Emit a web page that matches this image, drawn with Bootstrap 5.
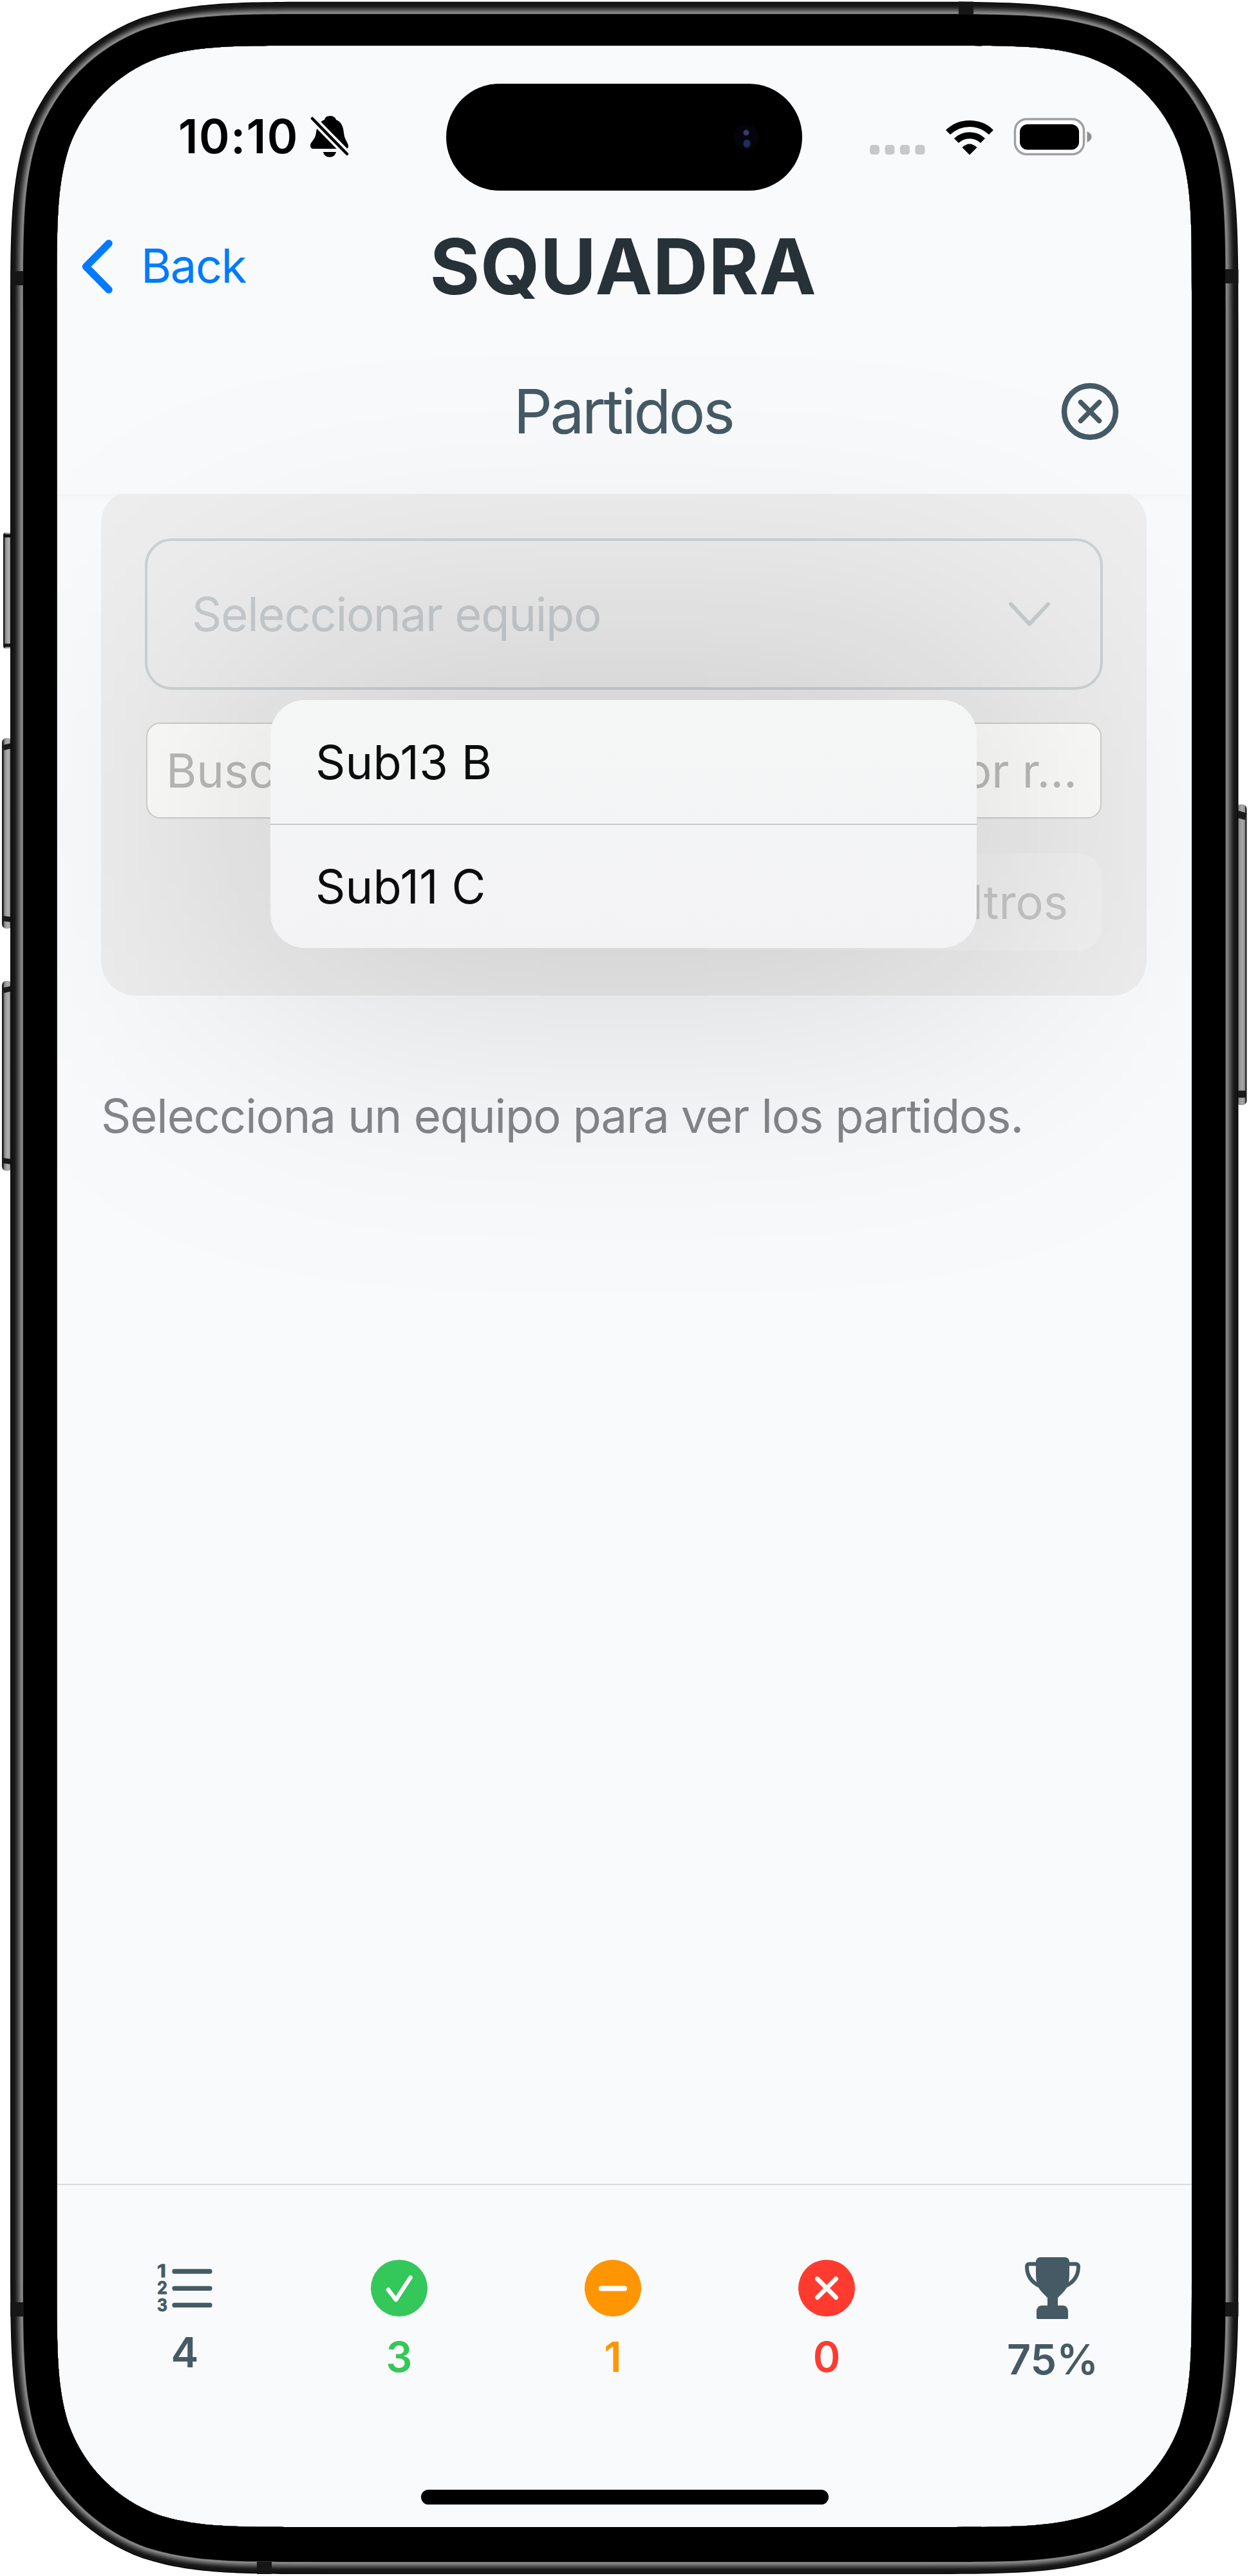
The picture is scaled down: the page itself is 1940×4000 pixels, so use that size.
<!DOCTYPE html>
<html lang="es">
<head>
<meta charset="utf-8">
<meta name="viewport" content="width=device-width, initial-scale=1">
<title>SQUADRA</title>
<link href="https://cdn.jsdelivr.net/npm/bootstrap@5.3.0/dist/css/bootstrap.min.css" rel="stylesheet">
<style>
  html, body { margin: 0; background: #fff; }
  body { font-family: Inter, "Liberation Sans", sans-serif; font-size: 72.3px; line-height: 1; color: #000; }
  .device { width: 1940px; height: 4000px; padding: 71px 89px 76px; overflow: hidden; }
  .device-frame { left: 0; top: 0; z-index: 20; pointer-events: none; }
  .phone-screen { background: #f9fafc; border-radius: 180px; height: 3853px; overflow: hidden; }
  .statusbar { height: 250px; padding: 33px 155px 0 188px; }
  .clock { font-weight: 600; letter-spacing: .02em; }
  .bell { margin-left: 18px; }
  .island { left: 604px; top: 59px; width: 553px; height: 166px; border-radius: 83px; background: #000; z-index: 6; }
  .titlebar { height: 183px; padding-right: 4px; padding-top: 3px; }
  .back-link { left: 37px; top: 0; height: 100%; padding-top: 2px; color: #007aff; letter-spacing: -.02em; }
  .back-link span { margin-left: 43px; }
  .brand-title { font-size: 119px; font-weight: 700; color: #263238; letter-spacing: .005em; }
  .subbar { height: 263px; padding-top: 6px; padding-right: 4px; color: #455a64; }
  .subbar h2 { font-size: 94.500px; font-weight: 400; letter-spacing: -.037em; }
  .close-btn { right: 113px; top: 90px; padding: 0; border: 0; background: none; line-height: 0; }
  .header-edge { height: 14px; margin-bottom: -14px; background: linear-gradient(rgba(0,0,0,.02), rgba(0,0,0,0)); }
  .filter-panel { margin: 0 70px 0 68px; height: 779px; padding: 69px 68px 0; border-radius: 36px 36px 54px 54px / 46px 46px 54px 54px; background: #eeeeef; }
  .team-select { height: 235px; border: 4.5px solid #cdd2d5; border-radius: 42px; padding: 1px 78px 0 69px; color: #c7cccf; letter-spacing: -.0165em; }
  .search-box { height: 149px; margin: 51px 2px 0; border: 2px solid #cfcfcf; border-radius: 22px; background: #fdfdfc; padding: 2px 36px 0 29px; color: #bbb; }
  .clear-btn { height: 151px; width: 640px; margin: 54px 2px 0 auto; border-radius: 36px; background: #f2f2f3; padding: 2px 52px 0 0; color: #c7c7c7; }
  .menu-glow { left: 271px; top: 956px; width: 1217px; height: 505px; z-index: 4; border-radius: 80px; background: rgba(0,0,0,.155); filter: blur(235px); }
  .menu-pop { left: 331px; top: 1016px; width: 1097px; height: 385px; z-index: 5; border-radius: 54px; background: linear-gradient(#f5f6f6, #f3f3f5); color: #0c0c0c; overflow: hidden; letter-spacing: .003em; }
  .menu-pop li { height: 192px; padding: 2px 0 0 70px; }
  .menu-pop li + li { border-top: 2.5px solid #c9cbcc; }
  .empty-note { color: #86868a; margin: 151px 0 0 68px; letter-spacing: -.0152em; }
  .statbar { height: 533px; border-top: 2.5px solid #dadbdd; font-size: 64.500px; font-weight: 600; color: #455a64; }
  .stat-list { height: 416px; padding-left: 152px; gap: 242px; }
  .stat-item { width: 90px; gap: 31px; white-space: nowrap; }
  .stat-first { width: 92px; }
  .stat-last { width: 128px; }
  .c-win { color: #34c759; }
  .c-draw { color: #ff9500; }
  .c-loss { color: #ff3b30; }
  .home-bar { left: 565px; bottom: 35px; width: 633px; height: 23px; border-radius: 12px; background: #000; }
</style>
<script src="https://cdn.jsdelivr.net/npm/bootstrap@5.3.0/dist/js/bootstrap.bundle.min.js"></script>
</head>
<body>
<div class="device position-relative">
  <main class="phone-screen position-relative d-flex flex-column">
    <div class="statusbar d-flex align-items-center justify-content-between flex-shrink-0">
      <div class="d-flex align-items-center">
        <span class="clock">10:10</span>
        <svg class="bell" width="60" height="66" viewBox="0 0 60 66"><path d="M31 1c5 0 8 2.500 9 6 8 3 11 10 12 20 1 12 7 15 7 21 0 3-2 4-4 4H5c-3 0-5-2-5-5 0-6 8-9 9-20C10 17 14 10 22 7c1-4 4-6 9-6z"/><path d="M20 57h20c-1 5-5 8-10 8s-9-3-10-8z"/><path d="M-1 1L62 65" stroke="#f9fafc" stroke-width="12"/><path d="M3 5L57 60" stroke="#000" stroke-width="4.500" stroke-linecap="round"/></svg>
      </div>
      <svg width="346" height="60" viewBox="1350 182 346 60"><g fill="#c8c8ca"><rect x="1351" y="224" width="15" height="15" rx="4.500"/><rect x="1374.500" y="224" width="15" height="15" rx="4.500"/><rect x="1398" y="224" width="15" height="15" rx="4.500"/><rect x="1421.500" y="224" width="15" height="15" rx="4.500"/></g>
        <g fill="none" stroke="#000" stroke-width="10"><path d="M1472.500 204.500a48 48 0 0 1 67 0"/><path d="M1485.500 217.500a29.500 29.500 0 0 1 41 0"/></g><path d="M1494.500 228q11.500-11 23 0l-11.500 11.500z"/>
        <rect x="1576.500" y="184" width="107" height="54.500" rx="18" fill="#fff" stroke="#a0a0a2" stroke-width="3.500"/><rect x="1584" y="192" width="92" height="39.500" rx="12"/><path d="M1688.500 203q7 3 7 8.500t-7 8.500z" fill="#8e8e90"/></svg>
    </div>
    <div class="island position-absolute"><svg class="d-block" width="553" height="166"><ellipse cx="466" cy="83" rx="19" ry="20" fill="#04040c"/><circle cx="466" cy="76" r="4.500" fill="#3a3870"/><ellipse cx="467" cy="93" rx="5.500" ry="6.500" fill="#222c58"/></svg></div>

    <header class="titlebar position-relative d-flex align-items-center justify-content-center flex-shrink-0">
      <a class="back-link position-absolute d-flex align-items-center text-decoration-none" href="#"><svg width="50" height="86" viewBox="0 0 50 86" fill="none" stroke="#007aff" stroke-width="11.500" stroke-linecap="round" stroke-linejoin="round"><path d="M43 7L7.500 43 43 79"/></svg><span>Back</span></a>
      <h1 class="brand-title m-0">SQUADRA</h1>
    </header>
    <div class="subbar position-relative d-flex align-items-center justify-content-center flex-shrink-0">
      <h2 class="m-0">Partidos</h2>
      <button class="close-btn position-absolute" aria-label="Cerrar"><svg width="90" height="90" viewBox="0 0 90 90" fill="none" stroke="#455a64" stroke-width="8.500" stroke-linecap="round"><circle cx="45" cy="45" r="40"/><path d="M30.500 30.500l29 29m0-29l-29 29" stroke-width="7.500"/></svg></button>
    </div>
    <div class="header-edge flex-shrink-0"></div>

    <section class="filter-panel flex-shrink-0">
      <div class="team-select d-flex align-items-center justify-content-between"><span>Seleccionar equipo</span><svg width="64" height="38" viewBox="0 0 64 38" fill="none" stroke="currentColor" stroke-width="6" stroke-linecap="round" stroke-linejoin="round"><path d="M3 3l29 31L61 3"/></svg></div>
      <div class="search-box d-flex align-items-center justify-content-between"><span>Buscar</span><span>por r…</span></div>
      <div class="clear-btn d-flex align-items-center justify-content-end"><span>Limpiar filtros</span></div>
    </section>
    <p class="empty-note mb-0">Selecciona un equipo para ver los partidos.</p>

    <div class="menu-glow position-absolute"></div>
    <ul class="menu-pop position-absolute list-unstyled m-0">
      <li class="d-flex align-items-center">Sub13 B</li>
      <li class="d-flex align-items-center">Sub11 C</li>
    </ul>

    <footer class="statbar mt-auto flex-shrink-0">
      <div class="stat-list d-flex align-items-center">
        <div class="stat-item stat-first d-flex flex-column align-items-center">
          <svg class="overflow-visible" width="87" height="74" viewBox="0 0 87 74"><g font-family="Inter, sans-serif" font-weight="700" font-size="27" fill="#455a64" stroke="#455a64" stroke-width=".8"><text x="0" y="20" textLength="14" lengthAdjust="spacingAndGlyphs">1</text><text x="0" y="46" textLength="16" lengthAdjust="spacingAndGlyphs">2</text><text x="0" y="73" textLength="16" lengthAdjust="spacingAndGlyphs">3</text></g><g stroke="#455a64" stroke-width="7.300" stroke-linecap="round"><path d="M27 11h55M27 37.300h55M27 63.400h55"/></g></svg>
          <span>4</span>
        </div>
        <div class="stat-item c-win d-flex flex-column align-items-center">
          <svg width="88" height="88" viewBox="0 0 88 88"><circle cx="44" cy="44" r="44" fill="#34c759"/><path d="M27 46.500L39 62 61.500 27.500" fill="none" stroke="#fff" stroke-width="6.500" stroke-linecap="round" stroke-linejoin="round"/></svg>
          <span>3</span>
        </div>
        <div class="stat-item c-draw d-flex flex-column align-items-center">
          <svg width="88" height="88" viewBox="0 0 88 88"><circle cx="44" cy="44" r="44" fill="#ff9500"/><path d="M26 44.500h36" stroke="#fff" stroke-width="8" stroke-linecap="round"/></svg>
          <span>1</span>
        </div>
        <div class="stat-item c-loss d-flex flex-column align-items-center">
          <svg width="88" height="88" viewBox="0 0 88 88"><circle cx="44" cy="44" r="44" fill="#ff3b30"/><path d="M29.500 29.500l29 29m0-29l-29 29" stroke="#fff" stroke-width="7" stroke-linecap="round"/></svg>
          <span>0</span>
        </div>
        <div class="stat-item stat-last d-flex flex-column align-items-center">
          <svg width="86" height="96" viewBox="0 0 86 96" fill="#455a64"><path d="M24 0h38c4 0 7 3 7 7v19c0 15-4 23-10 29l-8 8v14h-16v-14l-8-8c-6-6-10-14-10-29V7c0-4 3-7 7-7z"/><path d="M19 77h0c0 0 5-2 8-2h32c5 0 8 4 8 9v10c0 1.500-1 2-2 2H20c-1.500 0-2-1-2-2V84c0-4 2-7 5-8z"/><path d="M20 10.500H7c-2.500 0-4 1.500-4 4C3 33 15 43 31 48M66 10.500h13c2.500 0 4 1.500 4 4C83 33 71 43 55 48" fill="none" stroke="#455a64" stroke-width="6"/></svg>
          <span>75%</span>
        </div>
      </div>
    </footer>
    <div class="home-bar position-absolute"></div>
  </main>

  <svg class="device-frame position-absolute" width="1940" height="4000" viewBox="0 0 1940 4000">
    <defs>
      <linearGradient id="keyL"><stop offset="0" stop-color="#111"/><stop offset=".15" stop-color="#333"/><stop offset=".25" stop-color="#8c8c8c"/><stop offset=".6" stop-color="#b0b0b0"/><stop offset=".85" stop-color="#8a8a8a"/><stop offset="1" stop-color="#333"/></linearGradient>
      <linearGradient id="keyR"><stop offset="0" stop-color="#555"/><stop offset=".2" stop-color="#8a8a8a"/><stop offset=".6" stop-color="#aaa"/><stop offset=".82" stop-color="#888"/><stop offset=".9" stop-color="#222"/><stop offset="1" stop-color="#111"/></linearGradient>
    </defs>
    <path id="cornerMask" fill="#fff" fill-rule="evenodd"/>
    <g>
      <rect x="5" y="827" width="14" height="180" rx="4" fill="url(#keyL)"/><path d="M6 832h12M6 1002h12" stroke="#111" stroke-width="5"/>
      <rect x="3" y="1146" width="16" height="296" rx="7" fill="url(#keyL)"/><path d="M5 1161l13-3M4 1426l14 2" stroke="#1a1a1a" stroke-width="8"/>
      <rect x="3" y="1523" width="16" height="295" rx="7" fill="url(#keyL)"/><path d="M5 1538l13-3M4 1802l14 2" stroke="#1a1a1a" stroke-width="8"/>
      <rect x="1920" y="1249" width="16.500" height="467" rx="7" fill="url(#keyR)"/><path d="M1922 1264l13 4M1922 1699l13 0" stroke="#1a1a1a" stroke-width="11"/>
    </g>
    <g id="rim"></g>
    <g fill="#161616"><rect x="1489" y="2.500" width="23" height="20"/><rect x="399" y="3978" width="23" height="19"/><rect x="16" y="421" width="20.500" height="22"/><rect x="1903" y="418" width="20.500" height="22"/><rect x="16" y="3575" width="20.500" height="22"/><rect x="1903" y="3575" width="20.500" height="22"/></g>
  </svg>
</div>
<script>
  // Rounded rectangle with continuous-curvature corners.
  function smoothRect(x0, y0, x1, y1, r) {
    const corner = (cx, cy, ax, ay, swap) => {
      const pts = [[1.52866,0],[1.08849,0],[.86841,0],[.63149,.07491],[.37282,.16906],[.16906,.37282],[.07491,.63149],[0,.86841],[0,1.08849],[0,1.52866]];
      if (swap) pts.reverse();
      return pts.map(p => (cx + ax * p[0] * r).toFixed(1) + ' ' + (cy + ay * p[1] * r).toFixed(1));
    };
    const seg = c => c[0] + 'C' + c.slice(1).join(' ');
    return 'M' + seg(corner(x1, y0, -1, 1)) + 'L' + seg(corner(x1, y1, -1, -1, true)) +
      'L' + seg(corner(x0, y1, 1, -1)) + 'L' + seg(corner(x0, y0, 1, 1, true)) + 'Z';
  }
  const screenHole = smoothRect(88.500, 71, 1851, 3924, 250);
  const layers = [[0,'#0c0c0c'],[2,'#161616'],[7,'#222'],[9,'#333'],[11,'#484848'],[13,'#5e5e5e'],[15,'#757575'],[17,'#888'],[19,'#6a6a6a'],[20,'#000']];
  document.getElementById('rim').innerHTML = layers.map(([i, c]) =>
    `<path fill="${c}" fill-rule="evenodd" d="${smoothRect(16 + i, 2.700 + i * .97, 1923.500 - i, 3997 - i * .95, 326 - i * 1.2)}${screenHole}"/>`).join('');
  document.getElementById('cornerMask').setAttribute('d', 'M0 0H1940V4000H0Z' + screenHole);
</script>
</body>
</html>
